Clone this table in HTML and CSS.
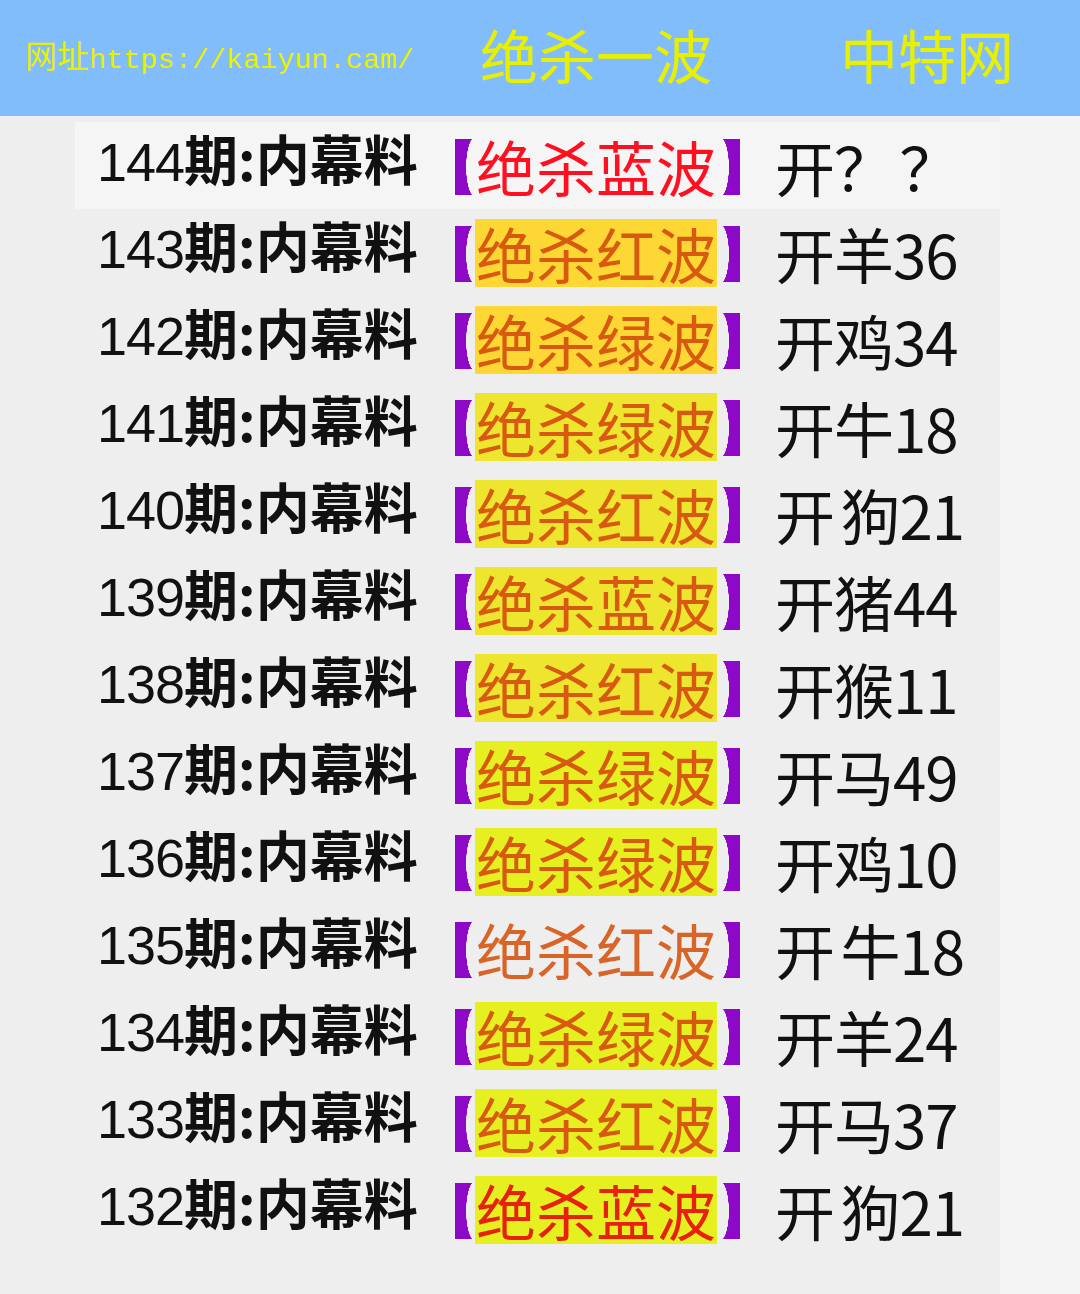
FILE: index.html
```html
<!DOCTYPE html>
<html lang="zh-CN">
<head>
    <meta charset="UTF-8">
    <meta name="viewport" content="width=device-width, initial-scale=1.0">
    <title>绝杀一波</title>
    <link rel="stylesheet" href="styles.css">
</head>
<body>
    <header class="top">
        <div class="site"><span class="site-cn">网址</span>https://kaiyun.cam/</div>
        <div class="title">绝杀一波</div>
        <div class="brand">中特网</div>
    </header>

    <main class="list">
        <div class="row first">
            <span class="issue"><span class="num">144</span><b>期:内幕料</b></span>
            <span class="br open"></span><span class="wave red">绝杀蓝波</span><span class="br close"></span>
            <span class="result">开？ ？</span>
        </div>
        <div class="row">
            <span class="issue"><span class="num">143</span><b>期:内幕料</b></span>
            <span class="br open"></span><span class="wave gold">绝杀红波</span><span class="br close"></span>
            <span class="result">开羊36</span>
        </div>
        <div class="row">
            <span class="issue"><span class="num">142</span><b>期:内幕料</b></span>
            <span class="br open"></span><span class="wave gold">绝杀绿波</span><span class="br close"></span>
            <span class="result">开鸡34</span>
        </div>
        <div class="row">
            <span class="issue"><span class="num">141</span><b>期:内幕料</b></span>
            <span class="br open"></span><span class="wave lemon">绝杀绿波</span><span class="br close"></span>
            <span class="result">开牛18</span>
        </div>
        <div class="row">
            <span class="issue"><span class="num">140</span><b>期:内幕料</b></span>
            <span class="br open"></span><span class="wave lemon">绝杀红波</span><span class="br close"></span>
            <span class="result">开 狗21</span>
        </div>
        <div class="row">
            <span class="issue"><span class="num">139</span><b>期:内幕料</b></span>
            <span class="br open"></span><span class="wave lemon">绝杀蓝波</span><span class="br close"></span>
            <span class="result">开猪44</span>
        </div>
        <div class="row">
            <span class="issue"><span class="num">138</span><b>期:内幕料</b></span>
            <span class="br open"></span><span class="wave lemon">绝杀红波</span><span class="br close"></span>
            <span class="result">开猴11</span>
        </div>
        <div class="row">
            <span class="issue"><span class="num">137</span><b>期:内幕料</b></span>
            <span class="br open"></span><span class="wave lime">绝杀绿波</span><span class="br close"></span>
            <span class="result">开马49</span>
        </div>
        <div class="row">
            <span class="issue"><span class="num">136</span><b>期:内幕料</b></span>
            <span class="br open"></span><span class="wave lime">绝杀绿波</span><span class="br close"></span>
            <span class="result">开鸡10</span>
        </div>
        <div class="row">
            <span class="issue"><span class="num">135</span><b>期:内幕料</b></span>
            <span class="br open"></span><span class="wave plain">绝杀红波</span><span class="br close"></span>
            <span class="result">开 牛18</span>
        </div>
        <div class="row">
            <span class="issue"><span class="num">134</span><b>期:内幕料</b></span>
            <span class="br open"></span><span class="wave lime">绝杀绿波</span><span class="br close"></span>
            <span class="result">开羊24</span>
        </div>
        <div class="row">
            <span class="issue"><span class="num">133</span><b>期:内幕料</b></span>
            <span class="br open"></span><span class="wave lime">绝杀红波</span><span class="br close"></span>
            <span class="result">开马37</span>
        </div>
        <div class="row">
            <span class="issue"><span class="num">132</span><b>期:内幕料</b></span>
            <span class="br open"></span><span class="wave lime hot">绝杀蓝波</span><span class="br close"></span>
            <span class="result">开 狗21</span>
        </div>
    </main>
</body>
</html>
```

FILE: styles.css
```css
body {
    font-family: "Noto Sans CJK SC", sans-serif;
    background-color: #f4f4f4;
    color: #111;
    margin: 0;
    padding: 0;
}

.top {
    display: flex;
    align-items: center;
    height: 108px;
    padding: 0 0 8px 25px;
    background-color: #82bdfb;
    color: #e8f000;
}

.site {
    font-family: "Liberation Mono", monospace;
    font-size: 28.5px;
    width: 455px;
}

.site-cn {
    font-family: "Noto Sans CJK SC", sans-serif;
    font-size: 32px;
}

.title,
.brand {
    font-size: 58px;
    line-height: 1;
}

.brand {
    margin-left: 128px;
}

.list {
    width: 1000px;
    background-color: #eeeeee;
    padding: 6px 0 50px;
}

.row {
    display: flex;
    align-items: center;
    height: 87px;
    padding-left: 97px;
}

.row.first {
    margin-left: 75px;
    padding-left: 22px;
    background-color: #f5f5f5;
}

.issue {
    font-family: "Liberation Sans", "Noto Sans CJK SC", sans-serif;
    font-size: 54px;
    line-height: 1;
    width: 358px;
    margin-bottom: 12px;
    white-space: nowrap;
}

.num {
    letter-spacing: -1px;
}

.issue b {
    font-family: "Noto Sans CJK SC", sans-serif;
    font-weight: 700;
}

/* lenticular brackets drawn as purple blocks with a curved inner side */
.br {
    width: 20px;
    height: 56px;
    margin-top: 2px;
}

.br.open {
    background: radial-gradient(ellipse 9px 30px at 100% 50%, #eeeeee 97%, #8e08c8 100%);
}

.br.close {
    margin-left: 3px;
    background: radial-gradient(ellipse 9px 30px at 0 50%, #eeeeee 97%, #8e08c8 100%);
}

.row.first .br.open {
    background: radial-gradient(ellipse 9px 30px at 100% 50%, #f5f5f5 97%, #8e08c8 100%);
}

.row.first .br.close {
    background: radial-gradient(ellipse 9px 30px at 0 50%, #f5f5f5 97%, #8e08c8 100%);
}

.wave {
    font-size: 60px;
    line-height: 68px;
    height: 68px;
    padding: 0 1px;
    color: #d75a10;
}

.wave.red {
    color: #ff1020;
}

.wave.gold {
    background-color: #fdd835;
}

.wave.lemon {
    background-color: #ede52e;
}

.wave.lime {
    background-color: #e6f020;
}

.wave.hot {
    color: #e8200e;
}

.wave.plain {
    color: #d86428;
}

.result {
    font-size: 60px;
    line-height: 1;
    margin-left: 35px;
    letter-spacing: -1px;
    word-spacing: -6px;
    white-space: pre;
}
```
